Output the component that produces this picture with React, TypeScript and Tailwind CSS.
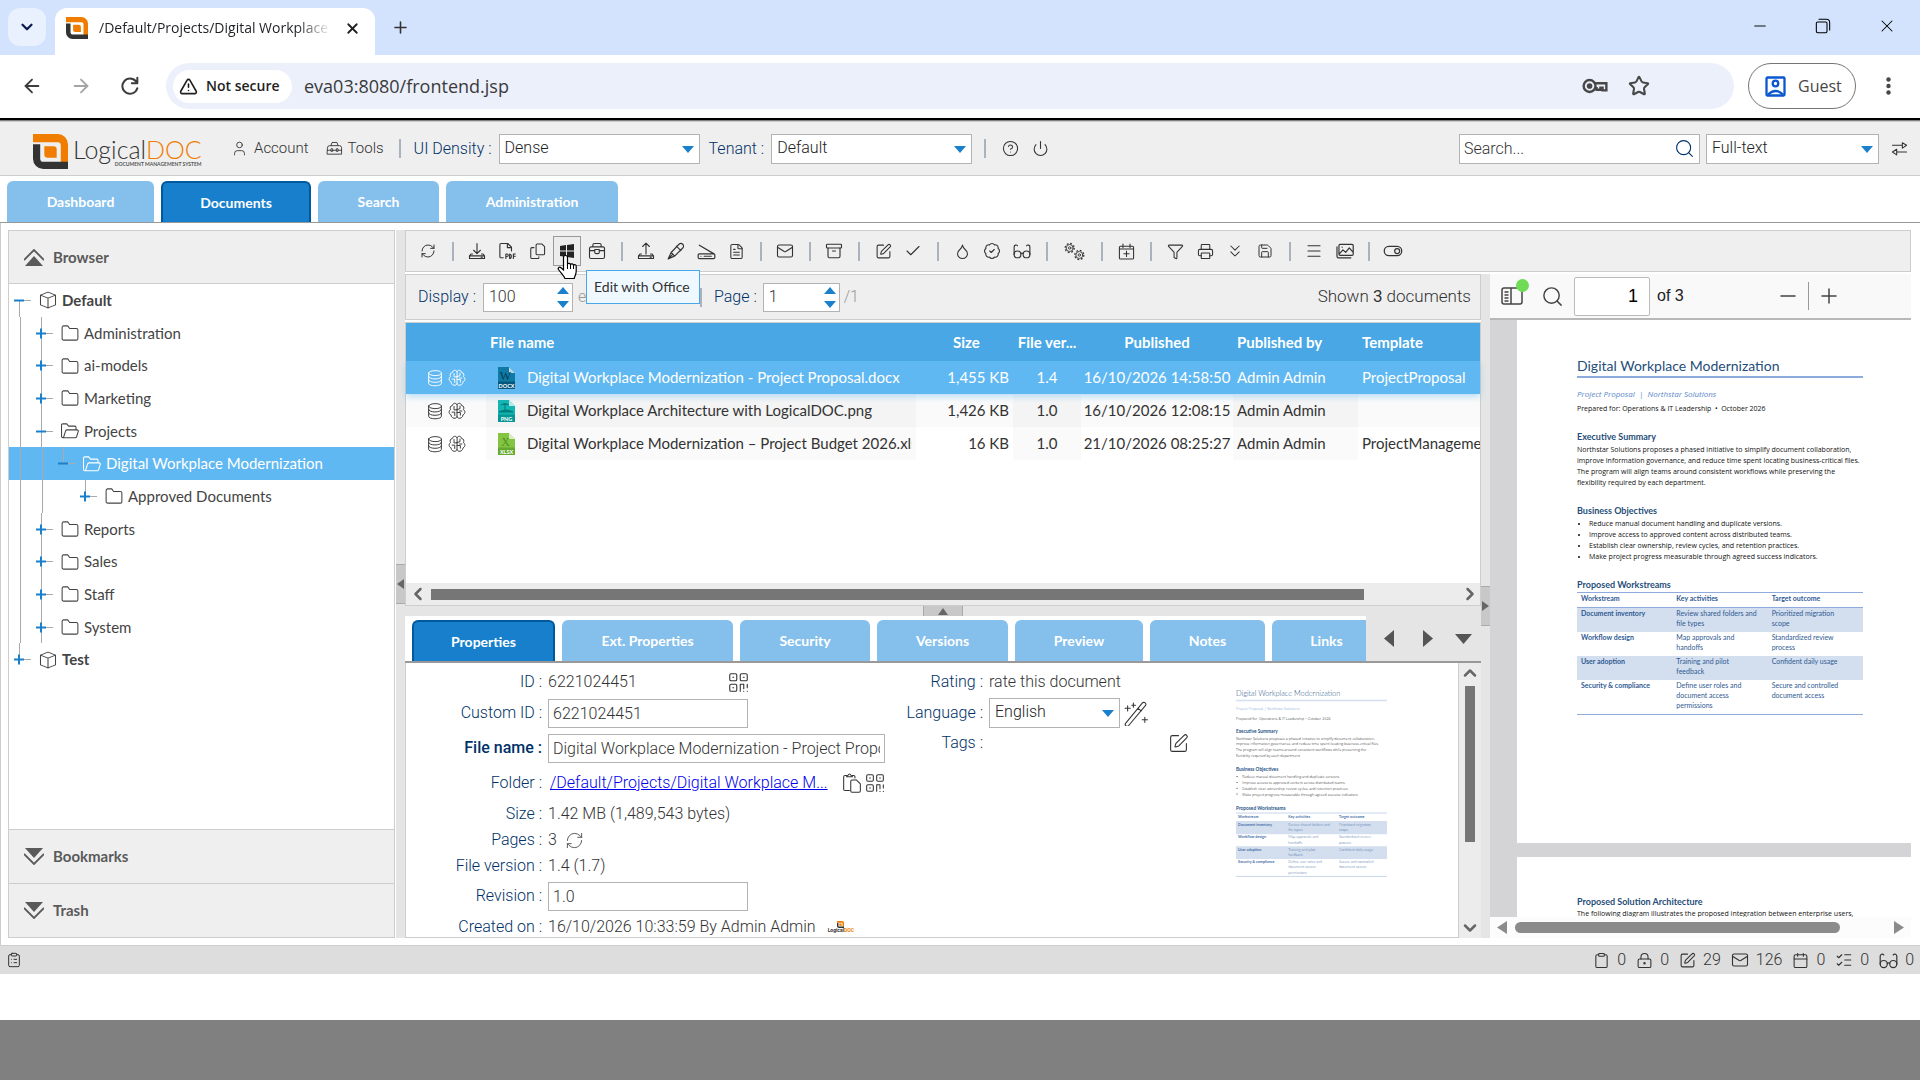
import type { ReactNode } from "react";
import {
  Archive,
  ArrowLeft,
  ArrowRight,
  BadgeCheck,
  Calendar,
  Check,
  ChevronDown,
  ChevronLeft,
  ChevronRight,
  ChevronUp,
  ChevronsDown,
  CircleHelp,
  Clipboard,
  ClipboardList,
  Droplet,
  FileText,
  Filter,
  ListChecks,
  LockKeyhole,
  Mail,
  Menu,
  Minus,
  Plus,
  Power,
  Printer,
  RefreshCw,
  Save,
  Search,
  SquarePen,
  Star,
  TriangleAlert,
  User,
  X,
} from "lucide-react";

type IconProps = { size?: number; className?: string; strokeWidth?: number };

const Svg = ({
  size = 20,
  className = "",
  strokeWidth = 1.25,
  children,
}: IconProps & { children: ReactNode }) => (
  <svg
    width={size}
    height={size}
    viewBox="0 0 24 24"
    fill="none"
    stroke="currentColor"
    strokeWidth={strokeWidth}
    strokeLinecap="round"
    strokeLinejoin="round"
    className={className}
    aria-hidden="true"
  >
    {children}
  </svg>
);

/* ---------- custom icons ---------- */

const Cube = (p: IconProps) => (
  <Svg {...p}>
    <path d="M12 1.5 22 5.5v13l-10 4-10-4v-13z M2 5.5l10 4 10-4 M12 9.5v13" />
  </Svg>
);

const FolderClosed = (p: IconProps) => (
  <Svg {...p}>
    <path d="M1.5 19.5v-15a2 2 0 0 1 2-2h5.5l2.5 3.5h9a2 2 0 0 1 2 2v11.5a2 2 0 0 1-2 2h-17a2 2 0 0 1-2-2z" />
  </Svg>
);

const FolderOpened = (p: IconProps) => (
  <Svg {...p}>
    <path d="M2.5 21h16.5a2 2 0 0 0 1.8-1.3L23 12.5a1.5 1.5 0 0 0-1.5-2H8a2 2 0 0 0-1.8 1.3L3.5 20a1.5 1.5 0 0 1-2.8-.8V4a1.5 1.5 0 0 1 1.5-1.5h5.5L10 5.5h8.5A1.5 1.5 0 0 1 20 7v3.5" />
  </Svg>
);

const Toolbox = (p: IconProps) => (
  <Svg {...p}>
    <path d="M2 11a3 3 0 0 1 3-3h14a3 3 0 0 1 3 3v9H2z M7 8l1.5-4.5h7L17 8 M2 14.5h5 M9.5 14.5h5 M17 14.5h5 M7 13v3h2.5v-3z M14.5 13v3H17v-3z" />
  </Svg>
);

const Drive = ({ up, ...p }: IconProps & { up?: boolean }) => (
  <Svg {...p}>
    <path d="M6 16H4l-2 2.5V22h20v-3.5L20 16h-2 M2 18.5h20 M17.5 20.3h1.5" />
    {up ? <path d="M12 16V2 M7.5 6 12 1.5 16.5 6" /> : <path d="M12 2v13 M7.5 11 12 15.5 16.5 11" />}
  </Svg>
);

const PdfFile = (p: IconProps) => (
  <Svg {...p}>
    <path d="M7 21H4a1.5 1.5 0 0 1-1.5-1.5v-16A1.5 1.5 0 0 1 4 2h9l5 5v5 M12.5 2v5.5H18" />
    <path d="M10.5 22v-6h1.5a1.5 1.5 0 0 1 0 3.3h-1.5 M15.5 16v6c3 0 3-6 0-6z M20.5 22v-6H23 M20.5 19H23" />
  </Svg>
);

const CopyPages = (p: IconProps) => (
  <Svg {...p}>
    <path d="M11.5 1.5h7L22 5v10a1.5 1.5 0 0 1-1.5 1.5h-9A1.5 1.5 0 0 1 10 15V3a1.5 1.5 0 0 1 1.5-1.5z M7 6.5H4A1.5 1.5 0 0 0 2.5 8v12.5A1.5 1.5 0 0 0 4 22h8.5a1.5 1.5 0 0 0 1.5-1.5v-1" />
  </Svg>
);

const Suitcase = (p: IconProps) => (
  <Svg {...p}>
    <path d="M4 6.5h16a2 2 0 0 1 2 2V20a2 2 0 0 1-2 2H4a2 2 0 0 1-2-2V8.5a2 2 0 0 1 2-2z M6.5 6.5V4a2 2 0 0 1 2-2h7a2 2 0 0 1 2 2v2.5 M2 11.5h7 M15 11.5h7 M9 10h6v3.5a2 2 0 0 1-2 2h-2a2 2 0 0 1-2-2z" />
  </Svg>
);

const Pen = (p: IconProps) => (
  <Svg {...p}>
    <path d="M1.5 22.5 5.5 14 16 3a3.5 3.5 0 0 1 5 5L10.5 18.5z M12.5 5.5l6 6 M5.5 14l4.5 4.5 M1.5 22.5l6-6" />
  </Svg>
);

const Scanner = (p: IconProps) => (
  <Svg {...p}>
    <path d="M3 15h18a1.5 1.5 0 0 1 1.5 1.5v3A1.5 1.5 0 0 1 21 21H3a1.5 1.5 0 0 1-1.5-1.5v-3A1.5 1.5 0 0 1 3 15z M9 18h9 M5 18h.1 M3 4l18.5 11" />
  </Svg>
);

const Spectacles = (p: IconProps) => (
  <Svg {...p}>
    <circle cx="6" cy="16.5" r="4.5" />
    <circle cx="18" cy="16.5" r="4.5" />
    <path d="M10.5 15.5q1.5-1.2 3 0 M1.5 16.5V6.5A2.5 2.5 0 0 1 6 5 M22.5 16.5V6.5A2.5 2.5 0 0 0 18 5" />
  </Svg>
);

const Gear = ({ cx, cy }: { cx: number; cy: number }) => (
  <g>
    <circle cx={cx} cy={cy} r="5.2" strokeDasharray="2.04 2.04" strokeWidth="1.4" strokeLinecap="butt" />
    <circle cx={cx} cy={cy} r="4" />
    <circle cx={cx} cy={cy} r="1.4" />
  </g>
);

const Gears = (p: IconProps) => (
  <Svg {...p}>
    <Gear cx={6.5} cy={8} />
    <Gear cx={17.5} cy={16} />
  </Svg>
);

const CalendarAdd = (p: IconProps) => (
  <Svg {...p}>
    <path d="M3.5 4.5h17a1.5 1.5 0 0 1 1.5 1.5v15a1.5 1.5 0 0 1-1.5 1.5h-17A1.5 1.5 0 0 1 2 21V6a1.5 1.5 0 0 1 1.5-1.5z M2 8.5h20 M7 1.5v5 M17 1.5v5 M12 11.5v7.5 M8.2 15.3h7.5" />
  </Svg>
);

const PictureStack = (p: IconProps) => (
  <Svg {...p}>
    <path d="M6.5 3h15A1.5 1.5 0 0 1 23 4.5v11a1.5 1.5 0 0 1-1.5 1.5h-15A1.5 1.5 0 0 1 5 15.5v-11A1.5 1.5 0 0 1 6.5 3z M5.5 15l4.5-5 3.5 3L18 7.5l5 5.5 M2.5 6v12A2 2 0 0 0 4.5 20H20 M9 6.5h.1" />
  </Svg>
);

const Switch = (p: IconProps) => (
  <Svg {...p}>
    <rect x="1.5" y="6.5" width="21" height="11" rx="5.5" />
    <circle cx="17" cy="12" r="3" />
  </Svg>
);

const Transfer = (p: IconProps) => (
  <Svg {...p}>
    <path d="M2 7.5h14 M16 4l6 3.5-6 4z M22 17H8 M8 13l-6 4 6 4z" />
  </Svg>
);

const Database = (p: IconProps) => (
  <Svg {...p}>
    <path d="M3.5 5.5c0-4.5 17-4.5 17 0s-17 4.500-17 0z M3.5 5.5V19c0 4.5 17 4.5 17 0V5.5 M3.5 10c0 4.5 17 4.5 17 0 M3.5 14.5c0 4.5 17 4.5 17 0" />
  </Svg>
);

const Brain = (p: IconProps) => (
  <Svg {...p}>
    <path d="M12 3.500C11 .8 6.500 1 6 4.500 3 5 2 8 3.500 10c-3 2-2.500 6 .5 7 0 3.500 3.500 5.500 6 4.500 1.500-.5 2-1.500 2-2.500z M12 3.500C13 .8 17.500 1 18 4.500c3 .5 4 3.500 2.500 5.500 3 2 2.500 6-.5 7 0 3.500-3.500 5.500-6 4.500-1.500-.5-2-1.500-2-2.500" />
    <path d="M8 6v4.500h4 M5.500 13.500H9V18 M16 5.500V9l-4 1 M12 14h4.500v3.500 M18.500 12h-3" />
  </Svg>
);

const QrCode = (p: IconProps) => (
  <Svg {...p}>
    <rect x="2" y="2" width="8" height="8" rx="1.5" />
    <rect x="14" y="2" width="8" height="8" rx="1.5" />
    <rect x="2" y="14" width="8" height="8" rx="1.5" />
    <path d="M5.5 6h1 M17.5 6h1 M5.5 18h1 M14 22v-8h4v5 M22 14v4 M18 22v.1 M22 22v.1" />
  </Svg>
);

const CopyPath = (p: IconProps) => (
  <Svg {...p}>
    <path d="M9 21H3.500A1.500 1.500 0 0 1 2 19.500V4.500A1.500 1.500 0 0 1 3.500 3H5.500 M12.500 3H14A1.500 1.500 0 0 1 15.500 4.500V6 M5.500 4.500q0-1.500 1.500-1.500 2-3.500 4 0 1.500 0 1.500 1.500z M12 8.500h5.500L22 13v8.500a1.500 1.500 0 0 1-1.500 1.500H12a1.500 1.500 0 0 1-1.500-1.500V10a1.500 1.500 0 0 1 1.500-1.500z" />
  </Svg>
);

const Wand = (p: IconProps) => (
  <Svg {...p} strokeWidth={1}>
    <path d="M1.500 21.500 17.500 2a1.800 1.800 0 0 1 3 2.500L4.500 23.500a1.800 1.800 0 0 1-3-2z M13.500 7l3 2.500 M1 7h5 M3.500 4.500v5 M9 2v4 M7.500 4h3.500 M17.500 18h5 M20 15.500v5" />
  </Svg>
);

const Dropdown = ({ className = "" }: { className?: string }) => (
  <svg width="12" height="7" viewBox="0 0 12 7" className={className} aria-hidden="true">
    <path d="M0 0h12L6 7z" fill="#1a80cc" />
  </svg>
);

const LogoMark = ({ size }: { size: number }) => (
  <svg width={size} height={size} viewBox="0 0 34 34" aria-hidden="true">
    <path d="M0 0h24a10 10 0 0 1 10 10v18h-7V11q0-3-3-3H0z" fill="#f07d00" />
    <path d="M0 10h7v14q0 3 3 3h24v7H10A10 10 0 0 1 0 24z" fill="#333" />
    <path d="M11 12h9q3 0 3 3v8h-9q-3 0-3-3z" fill="#f07d00" />
  </svg>
);

/* ---------- browser chrome ---------- */

const TitleBar = () => (
  <div className="flex h-[55px] items-end bg-[#d3e2fd] pl-2">
    <button
      aria-label="Search tabs"
      className="mb-[9px] flex h-[38px] w-[38px] items-center justify-center rounded-xl bg-[#e9f0fe] text-[#0b1d4f]"
    >
      <ChevronDown size={18} strokeWidth={3} />
    </button>
    <div className="ml-[9px] flex h-[47px] w-[320px] items-center rounded-t-xl bg-white pr-[14px] pb-[7px] pl-[11px]">
      <LogoMark size={22} />
      <span className="ml-[11px] w-[232px] overflow-hidden bg-linear-to-r from-[#202124] from-85% to-white bg-clip-text text-sm whitespace-nowrap text-transparent">
        /Default/Projects/Digital Workplace
      </span>
      <button aria-label="Close tab" className="ml-auto text-[#1f1f1f]">
        <X size={17} strokeWidth={2.5} />
      </button>
    </div>
    <button aria-label="New tab" className="mb-[18px] ml-4 text-[#333]">
      <Plus size={19} strokeWidth={2} />
    </button>
    <div className="mb-[19px] ml-auto flex items-center gap-[46px] pr-[23px] text-black">
      <button aria-label="Minimize">
        <Minus size={18} strokeWidth={1.25} />
      </button>
      <button aria-label="Restore">
        <Svg size={16} strokeWidth={1.6}>
          <path d="M4 6h12a2 2 0 0 1 2 2v12a2 2 0 0 1-2 2H4a2 2 0 0 1-2-2V8a2 2 0 0 1 2-2z M6 2h11a5 5 0 0 1 5 5v11" />
        </Svg>
      </button>
      <button aria-label="Close">
        <X size={20} strokeWidth={1.25} />
      </button>
    </div>
  </div>
);

const AddressBar = () => (
  <div className="flex h-[63px] items-start bg-white pt-2">
    <div className="flex h-[46px] w-[166px] items-center gap-[27px] pl-[21px]">
      <button aria-label="Back" className="text-[#3c3c3c]">
        <ArrowLeft size={22} />
      </button>
      <button aria-label="Forward" className="text-[#a5a5a5]">
        <ArrowRight size={22} />
      </button>
      <button aria-label="Reload" className="text-[#3c3c3c]">
        <Svg size={22} strokeWidth={2.2}>
          <path d="M20 14.500A8.300 8.300 0 1 1 18.500 7 M20 3v6h-6" />
        </Svg>
      </button>
    </div>
    <div className="flex h-[46px] flex-1 items-center rounded-full bg-[#ebf0fa] pr-[84px] pl-[7px]">
      <button className="flex h-[33px] w-[119px] items-center gap-2 rounded-full bg-white pl-[6px] text-sm font-semibold text-[#1f1f1f]">
        <TriangleAlert size={19} />
        Not secure
      </button>
      <input
        aria-label="Address"
        defaultValue="eva03:8080/frontend.jsp"
        className="ml-3 w-full flex-1 text-lg text-[#3a3a3a] outline-none"
      />
      <button aria-label="Passwords" className="text-[#474747]">
        <Svg size={26} strokeWidth={2.2}>
          <circle cx="7" cy="12" r="5.5" />
          <circle cx="7" cy="12" r="1.5" fill="currentColor" />
          <path d="M12 9.5h10.5v6.5h-3.5v-2.5h-2v2h-3.5v-1.5h-1" strokeLinejoin="miter" />
        </Svg>
      </button>
      <button aria-label="Bookmark" className="ml-5 text-[#474747]">
        <Star size={22} strokeWidth={2.25} />
      </button>
    </div>
    <button className="ml-[14px] flex h-[46px] w-[108px] items-center gap-3 rounded-full border border-[#757575] pl-4 text-base text-[#474747]">
      <svg width="21" height="21" viewBox="0 0 21 21" fill="none" stroke="#0b57d0" strokeWidth="2.3" aria-hidden="true">
        <rect x="1.5" y="1.5" width="18" height="18" rx="1" />
        <circle cx="10.5" cy="7.5" r="2.8" />
        <path d="M3 18.5q7.5-7 15 0" />
      </svg>
      Guest
    </button>
    <button aria-label="Menu" className="flex h-[46px] w-16 items-center justify-center">
      <svg width="5" height="18" viewBox="0 0 5 18" fill="#474747" aria-hidden="true">
        <circle cx="2.5" cy="2.5" r="2.2" />
        <circle cx="2.5" cy="9" r="2.2" />
        <circle cx="2.5" cy="15.5" r="2.2" />
      </svg>
    </button>
  </div>
);

/* ---------- application header ---------- */

const Separator = ({ className = "" }: { className?: string }) => (
  <div className={`h-[19px] w-[2px] bg-[#a9b3bf] ${className}`} />
);

const SelectBox = ({ id, value, className }: { id: string; value: string; className: string }) => (
  <div className={`relative ${className}`}>
    <select
      id={id}
      aria-label={id}
      defaultValue={value}
      className="h-[30px] w-full appearance-none border border-[#b3b3b3] bg-white pb-[2px] pl-[5px] text-base font-light text-[#222] outline-none"
    >
      <option>{value}</option>
    </select>
    <Dropdown className="pointer-events-none absolute top-[12px] right-[6px]" />
  </div>
);

const Header = () => (
  <header className="flex h-[55px] items-center border-y border-[#cdcdcd] bg-[#efefef] font-[Roboto,sans-serif] text-base font-light text-[#333]">
    <a href="#home" className="ml-[33px] flex w-[172px] items-center pt-[6px]" aria-label="LogicalDOC">
      <LogoMark size={35} />
      <span className="ml-[5px] flex flex-col font-[Lato,sans-serif] leading-none">
        <span className="text-[25px] leading-6 text-[#333]">
          Logical<span className="text-[#f07d00]">DOC</span>
        </span>
        <span className="self-end text-[5px] leading-[6px] font-bold text-[#555]">DOCUMENT MANAGEMENT SYSTEM</span>
      </span>
    </a>
    <button className="ml-[26px] flex items-center gap-[6px] text-[15px]">
      <User size={17} strokeWidth={1.25} />
      Account
    </button>
    <button className="ml-[17px] flex items-center gap-[5px] text-[15px]">
      <Toolbox size={17} />
      Tools
    </button>
    <Separator className="ml-[15px]" />
    <label htmlFor="density" className="ml-[13px] text-[#003168]">
      UI Density :
    </label>
    <SelectBox id="density" value="Dense" className="ml-[7px] w-[201px]" />
    <label htmlFor="tenant" className="ml-[9px] text-[#003168]">
      Tenant :
    </label>
    <SelectBox id="tenant" value="Default" className="ml-[7px] w-[201px]" />
    <Separator className="ml-3" />
    <button aria-label="Help" className="ml-4">
      <CircleHelp size={17} strokeWidth={1.5} />
    </button>
    <button aria-label="Logout" className="ml-[13px]">
      <Power size={17} strokeWidth={1.5} />
    </button>
    <div className="ml-auto flex h-[30px] w-[241px] items-center border border-[#b3b3b3] bg-white px-1">
      <input aria-label="Search" placeholder="Search..." className="min-w-0 flex-1 outline-none placeholder:text-[#333]" />
      <Search size={21} strokeWidth={1.25} className="text-[#003168]" />
    </div>
    <SelectBox id="searchmode" value="Full-text" className="ml-[6px] w-[173px]" />
    <button aria-label="Switch" className="mr-3 ml-3">
      <Transfer size={17} strokeWidth={1.5} />
    </button>
  </header>
);

const mainTabs = [
  { label: "Dashboard", width: "w-[147px]" },
  { label: "Documents", width: "w-[150px]", active: true },
  { label: "Search", width: "w-[121px]" },
  { label: "Administration", width: "w-[172px]" },
];

const tabOn = "bg-[#187fcd] border-x-2 border-t-2 border-[#00599c]";
const tabOff = "bg-[#85c0ec] pt-px";

const MainTabs = () => (
  <nav className="flex h-[47px] items-end gap-[7px] border-b border-[#999] bg-white pl-[7px]">
    {mainTabs.map((t) => (
      <button
        key={t.label}
        className={`h-[41px] rounded-t-md text-sm font-bold text-white ${t.width} ${t.active ? tabOn : tabOff}`}
      >
        {t.label}
      </button>
    ))}
  </nav>
);

/* ---------- left browser panel ---------- */

const tree = [
  { name: "Default", depth: 0, open: true, workspace: true },
  { name: "Administration", depth: 1 },
  { name: "ai-models", depth: 1 },
  { name: "Marketing", depth: 1 },
  { name: "Projects", depth: 1, open: true },
  { name: "Digital Workplace Modernization", depth: 2, open: true, selected: true },
  { name: "Approved Documents", depth: 3 },
  { name: "Reports", depth: 1 },
  { name: "Sales", depth: 1 },
  { name: "Staff", depth: 1 },
  { name: "System", depth: 1 },
  { name: "Test", depth: 0, workspace: true, last: true },
];

const Guide = ({ full }: { full?: boolean }) => (
  <div className="flex w-[22px] justify-center">
    {full && <div className="w-px bg-[#aaa]" />}
  </div>
);

const Opener = ({ open, last, depth }: { open?: boolean; last?: boolean; depth: number }) => (
  <svg width="30" height="33" viewBox="0 0 30 33" className="shrink-0" aria-hidden="true">
    <path
      d={`M11 16.5h11 ${depth === 0 && open ? "M10.5 17v16" : last || depth > 1 ? "M10.5 0v16" : "M10.5 0v33"}`}
      stroke="#aaa"
      fill="none"
    />
    <path d={open ? "M5 16.5h10" : "M5 16.5h10M10 11.5v10"} stroke="#1a80cc" strokeWidth="2" />
  </svg>
);

const Tree = () => (
  <ul className="flex h-[392px] flex-col text-[15px] text-[#444]">
    {tree.map((n) => (
      <li
        key={n.name}
        className={`flex flex-1 items-center overflow-hidden ${n.selected ? "bg-[#5fb8f1] text-white" : ""}`}
      >
        <div className="flex self-stretch">
          {n.depth > 0 && <Guide full />}
          {n.depth > 1 && <Guide full />}
          {n.depth > 2 && <Guide />}
        </div>
        <Opener open={n.open} last={n.last} depth={n.depth} />
        {n.workspace ? (
          <Cube size={18} strokeWidth={1.4} />
        ) : n.open ? (
          <FolderOpened size={18} strokeWidth={1.4} />
        ) : (
          <FolderClosed size={18} strokeWidth={1.4} />
        )}
        <span className={`ml-[5px] ${n.workspace ? "font-bold" : ""}`}>{n.name}</span>
      </li>
    ))}
  </ul>
);

const SectionHeader = ({ label, open }: { label: string; open?: boolean }) => (
  <button className="flex w-full items-center gap-[9px] bg-[#efefef] pl-[15px] text-left text-[15px] font-bold text-[#5a5a5a]">
    <svg width="20" height="17" viewBox="0 0 20 17" className={open ? "" : "rotate-180"} aria-hidden="true">
      <path d="M0 11 10 1l10 10" fill="none" stroke="#5a5a5a" strokeWidth="1.8" />
      <path d="M1 17 10 7l9 10z" fill="#5a5a5a" />
    </svg>
    {label}
  </button>
);

const BrowserPanel = () => (
  <aside className="flex w-[387px] shrink-0 flex-col border border-[#cdcdcd]">
    <div className="grid h-[53px] border-b border-[#cdcdcd]">
      <SectionHeader label="Browser" open />
    </div>
    <Tree />
    <div className="mt-auto grid h-[54px] border-t border-[#cdcdcd]">
      <SectionHeader label="Bookmarks" />
    </div>
    <div className="grid h-[54px] border-t border-[#cdcdcd]">
      <SectionHeader label="Trash" />
    </div>
  </aside>
);

/* ---------- document toolbar ---------- */

const ToolButton = ({ label, children, wide }: { label: string; children: ReactNode; wide?: boolean }) => (
  <button aria-label={label} className={`flex h-[30px] items-center justify-center ${wide ? "w-9" : "w-[30px]"}`}>
    {children}
  </button>
);

const ToolSep = () => (
  <div className="flex w-[19px] justify-center">
    <Separator />
  </div>
);

const OfficeButton = () => (
  <div className="relative">
    <button
      aria-label="Edit with Office"
      className="mx-px flex h-[30px] w-7 items-center justify-center border border-[#999] bg-[#ececec]"
    >
      <svg width="14" height="14" viewBox="0 0 14 14" fill="#222" aria-hidden="true">
        <path d="M0 2l6-.9v5.400H0z M7 1l7-1v6.500H7z M0 7.500h6v5.400L0 12z M7 7.500h7V14l-7-1z" />
      </svg>
    </button>
    <svg width="20" height="26" viewBox="0 0 20 26" className="absolute top-[18px] left-[5px] z-20" aria-hidden="true">
      <path
        d="M6.500 16V3.500a2 2 0 0 1 4 0V10a1.700 1.700 0 0 1 3 .5 1.700 1.700 0 0 1 3 .8 1.500 1.500 0 0 1 2.700 1V17c0 4-1.500 5-2 7.500H8C7 22 3.500 18.500 1.500 15.500c-1-2 1-3 2.500-1.800z"
        fill="#fff"
        stroke="#000"
        strokeWidth="1.2"
      />
      <path d="M10.5 10v5 M13.5 11v4 M16.5 12v3" stroke="#000" strokeWidth="1" />
    </svg>
    <div
      role="tooltip"
      className="absolute top-[34px] left-[34px] z-10 flex h-[34px] w-[114px] items-center border border-[#48a7e4] bg-[#f0f8ff] pl-[7px] text-sm whitespace-nowrap text-[#333]"
    >
      Edit with Office
    </div>
  </div>
);

const Toolbar = () => (
  <div className="flex h-[42px] items-center border border-[#cdcdcd] bg-[#efefef] pl-[7px] text-[#333]">
    <ToolButton label="Refresh">
      <RefreshCw size={16} strokeWidth={1.5} />
    </ToolButton>
    <ToolSep />
    <ToolButton label="Download"><Drive size={18} strokeWidth={1.5} /></ToolButton>
    <ToolButton label="Export PDF"><PdfFile size={18} strokeWidth={1.5} /></ToolButton>
    <ToolButton label="Copy"><CopyPages size={17} strokeWidth={1.5} /></ToolButton>
    <OfficeButton />
    <ToolButton label="Briefcase"><Suitcase size={18} strokeWidth={1.5} /></ToolButton>
    <ToolSep />
    <ToolButton label="Upload"><Drive size={18} strokeWidth={1.5} up /></ToolButton>
    <ToolButton label="Sign"><Pen size={18} strokeWidth={1.5} /></ToolButton>
    <ToolButton label="Scan"><Scanner size={19} strokeWidth={1.5} /></ToolButton>
    <ToolButton label="New document"><FileText size={17} strokeWidth={1.5} /></ToolButton>
    <ToolSep />
    <ToolButton label="Send"><Mail size={18} strokeWidth={1.5} /></ToolButton>
    <ToolSep />
    <ToolButton label="Archive"><Archive size={18} strokeWidth={1.5} /></ToolButton>
    <ToolSep />
    <ToolButton label="Edit"><SquarePen size={17} strokeWidth={1.5} /></ToolButton>
    <ToolButton label="Confirm"><Check size={18} strokeWidth={1.5} /></ToolButton>
    <ToolSep />
    <ToolButton label="Stamp"><Droplet size={17} strokeWidth={1.5} /></ToolButton>
    <ToolButton label="Approve"><BadgeCheck size={18} strokeWidth={1.5} /></ToolButton>
    <ToolButton label="Review"><Spectacles size={18} strokeWidth={1.5} /></ToolButton>
    <ToolSep />
    <ToolButton label="Automation" wide><Gears size={21} strokeWidth={1} /></ToolButton>
    <ToolSep />
    <ToolButton label="Schedule"><CalendarAdd size={17} strokeWidth={1.5} /></ToolButton>
    <ToolSep />
    <ToolButton label="Filter"><Filter size={17} strokeWidth={1.5} /></ToolButton>
    <ToolButton label="Print"><Printer size={17} strokeWidth={1.5} /></ToolButton>
    <ToolButton label="Expand"><ChevronsDown size={20} strokeWidth={1.25} /></ToolButton>
    <ToolButton label="Save layout"><Save size={16} strokeWidth={1.5} /></ToolButton>
    <ToolSep />
    <ToolButton label="List"><Menu size={18} strokeWidth={1.5} /></ToolButton>
    <ToolButton label="Gallery"><PictureStack size={19} strokeWidth={1.5} /></ToolButton>
    <ToolSep />
    <ToolButton label="Toggle preview"><Switch size={20} strokeWidth={1.5} /></ToolButton>
  </div>
);

/* ---------- documents grid ---------- */

const Spinner = ({ id, value, className }: { id: string; value: string; className: string }) => (
  <div className={`flex h-[29px] items-center border border-[#b3b3b3] bg-white pr-[3px] pl-[5px] ${className}`}>
    <input id={id} defaultValue={value} className="w-full min-w-0 text-[#333] outline-none" />
    <div className="flex flex-col gap-[7px]">
      <Dropdown className="rotate-180" />
      <Dropdown />
    </div>
  </div>
);

const PagingBar = () => (
  <div className="mt-[2px] flex h-[46px] items-center border border-[#cdcdcd] bg-[#efefef] pr-[9px] pl-3 font-[Roboto,sans-serif] text-base font-light">
    <label htmlFor="display" className="text-[#003168]">
      Display :
    </label>
    <Spinner id="display" value="100" className="ml-[7px] w-[90px]" />
    <span className="ml-[5px] w-[118px] text-[#999]">elements</span>
    <Separator className="ml-1" />
    <label htmlFor="page" className="ml-3 text-[#003168]">
      Page :
    </label>
    <Spinner id="page" value="1" className="ml-[6px] w-[77px]" />
    <span className="ml-1 text-[#999]">/1</span>
    <span className="ml-auto text-[17px] text-[#333]">
      Shown <b>3</b> documents
    </span>
  </div>
);

const FileBadge = ({ label, color, dark, mark }: { label: string; color: string; dark: string; mark: string }) => (
  <svg width="17" height="22" viewBox="0 0 17 22" className="shrink-0" aria-hidden="true">
    <path d="M0 0h11l6 6v16H0z" fill={color} />
    <path d="M11 0l6 6h-6z" fill="#fff" opacity=".7" />
    {mark ? (
      <text x="7.5" y="12.5" textAnchor="middle" fontSize="12" fontFamily="Liberation Serif, serif" fill={dark}>
        {mark}
      </text>
    ) : (
      <path d="M1 12q7-4 14 0z M7 11V5 M3 5q4-3 8 0" fill={dark} stroke={dark} />
    )}
    <rect y="14.5" width="17" height="7.5" fill={dark} opacity=".55" />
    <text x="8.5" y="20.5" textAnchor="middle" fontSize="5.5" fontWeight="700" fill="#fff">
      {label}
    </text>
  </svg>
);

const docs = [
  {
    name: "Digital Workplace Modernization - Project Proposal.docx",
    size: "1,455 KB",
    version: "1.4",
    published: "16/10/2026 14:58:50",
    by: "Admin Admin",
    template: "ProjectProposal",
    badge: { label: "DOCX", color: "#0f7ba5", dark: "#04395a", mark: "W" },
    row: "relative bg-[#5fb8f1] text-white shadow-[0_3px_6px_rgba(95,184,241,0.4)]",
    alt: "",
  },
  {
    name: "Digital Workplace Architecture with LogicalDOC.png",
    size: "1,426 KB",
    version: "1.0",
    published: "16/10/2026 12:08:15",
    by: "Admin Admin",
    template: "",
    badge: { label: "PNG", color: "#13b5b1", dark: "#007d7c", mark: "" },
    row: "bg-[#fafafa]",
    alt: "bg-[#f4f4f4]",
  },
  {
    name: "Digital Workplace Modernization – Project Budget 2026.xlsx",
    size: "16 KB",
    version: "1.0",
    published: "21/10/2026 08:25:27",
    by: "Admin Admin",
    template: "ProjectManagement",
    badge: { label: "XLSX", color: "#84c441", dark: "#4d9422", mark: "X" },
    row: "bg-white",
    alt: "bg-[#fafafa]",
  },
];

const DocumentsGrid = () => (
  <div className="mt-[2px] flex h-[284px] flex-col border border-[#cdcdcd] bg-white">
    <table className="w-full table-fixed border-collapse text-[15px] text-[#333]">
      <colgroup>
        <col className="w-[80px]" />
        <col />
        <col className="w-[97px]" />
        <col className="w-[68px]" />
        <col className="w-[152px]" />
        <col className="w-[125px]" />
        <col className="w-[122px]" />
      </colgroup>
      <thead>
        <tr className="h-[38px] bg-[#48a7e4] text-white">
          <th aria-label="Status" />
          <th className="pl-1 text-left">File name</th>
          <th className="pl-1">Size</th>
          <th>File ver...</th>
          <th>Published</th>
          <th className="pl-1 text-left">Published by</th>
          <th className="pl-1 text-left">Template</th>
        </tr>
      </thead>
      <tbody>
        {docs.map((d) => (
          <tr key={d.name} className={`h-[33px] whitespace-nowrap ${d.row}`}>
            <td>
              <div className="flex gap-1 pl-5">
                <Database size={18} />
                <Brain size={18} />
              </div>
            </td>
            <td className={d.alt}>
              <div className="flex items-center overflow-hidden pr-1 pl-3">
                <FileBadge {...d.badge} />
                <span className="ml-3 overflow-hidden">{d.name}</span>
              </div>
            </td>
            <td className="pr-1 text-right">{d.size}</td>
            <td className={`text-center ${d.alt}`}>{d.version}</td>
            <td className="text-center">{d.published}</td>
            <td className={`pl-1 ${d.alt}`}>{d.by}</td>
            <td className="overflow-hidden pl-1">{d.template}</td>
          </tr>
        ))}
      </tbody>
    </table>
    <div className="mt-auto flex h-[22px] items-center bg-[#ececec] text-[#666]">
      <ChevronLeft size={20} strokeWidth={3} className="mx-[2px]" />
      <div className="mr-[96px] ml-px h-[11px] flex-1 bg-[#767676]" />
      <ChevronRight size={20} strokeWidth={3} />
    </div>
  </div>
);

/* ---------- details ---------- */

const detailTabs = [
  { label: "Properties", width: "w-[143px]", active: true },
  { label: "Ext. Properties", width: "w-[171px]" },
  { label: "Security", width: "w-[130px]" },
  { label: "Versions", width: "w-[131px]" },
  { label: "Preview", width: "w-[128px]" },
  { label: "Notes", width: "w-[115px]" },
  { label: "Links", width: "w-[109px]" },
];

const DetailTabs = () => (
  <div className="flex h-[47px] border-b-2 border-[#999]">
    <div className="flex min-w-0 flex-1 items-end gap-[7px] overflow-hidden bg-white pl-[7px]">
      {detailTabs.map((t) => (
        <button
          key={t.label}
          className={`h-[41px] shrink-0 rounded-t-md text-sm font-bold text-white ${t.width} ${t.active ? tabOn : tabOff}`}
        >
          {t.label}
        </button>
      ))}
    </div>
    <div className="flex w-[115px] items-center gap-[29px] bg-[#e5e5e5] pl-[18px] text-[#555]">
      <button aria-label="Previous tabs">
        <svg width="10" height="17" viewBox="0 0 10 17" fill="#555"><path d="M10 0v17L0 8.500z" /></svg>
      </button>
      <button aria-label="Next tabs">
        <svg width="10" height="17" viewBox="0 0 10 17" fill="#555"><path d="M0 0v17l10-8.500z" /></svg>
      </button>
      <button aria-label="All tabs" className="-ml-[7px]">
        <svg width="17" height="10" viewBox="0 0 17 10" fill="#555"><path d="M0 0h17L8.500 10z" /></svg>
      </button>
    </div>
  </div>
);

const Row = ({ label, height, bold, htmlFor, children }: {
  label: string;
  height: string;
  bold?: boolean;
  htmlFor?: string;
  children?: ReactNode;
}) => (
  <div className={`flex items-center ${height}`}>
    <label
      htmlFor={htmlFor}
      className={`mr-[6px] w-[136px] shrink-0 text-right text-[#003168] ${bold ? "font-medium" : ""}`}
    >
      {label} :
    </label>
    {children}
  </div>
);

const field = "h-[29px] border border-[#b3b3b3] bg-white px-1 text-[#333] outline-none";

const docRows = [
  ["Document inventory", ["Review shared folders and", "file types"], ["Prioritized migration", "scope"]],
  ["Workflow design", ["Map approvals and", "handoffs"], ["Standardized review", "process"]],
  ["User adoption", ["Training and pilot", "feedback"], ["Confident daily usage"]],
  ["Security & compliance", ["Define user roles and", "document access", "permissions"], ["Secure and controlled", "document access"]],
] as [string, string[], string[]][];

const summary = [
  "Northstar Solutions proposes a phased initiative to simplify document collaboration,",
  "improve information governance, and reduce time spent locating business-critical files.",
  "The program will align teams around consistent workflows while preserving the",
  "flexibility required by each department.",
];

const objectives = [
  "Reduce manual document handling and duplicate versions.",
  "Improve access to approved content across distributed teams.",
  "Establish clear ownership, review cycles, and retention practices.",
  "Make project progress measurable through agreed success indicators.",
];

const rowTops = [249, 273, 296, 320];

/* small rendition of the first page */
const Thumbnail = () => (
  <svg
    width="151"
    height="188"
    viewBox="0 0 286 356"
    className="mt-[27px] shrink-0"
    fontSize="7"
    fill="#111"
    fontFamily="Open Sans, sans-serif"
  >
    <text x="0" y="12" fill="#1f5587" fontSize="14" fontFamily="Lato, sans-serif">
      Digital Workplace Modernization
    </text>
    <path d="M0 20h286" stroke="#d3dff0" strokeWidth="3" />
    <text x="0" y="37" fill="#6f97d3">Project Proposal  |  Northstar Solutions</text>
    <text x="0" y="56">Prepared for: Operations &amp; IT Leadership  •  October 2026</text>
    <g fill="#1f5587" fontSize="9" fontWeight="700" fontFamily="Lato, sans-serif">
      <text x="0" y="81">Executive Summary</text>
      <text x="0" y="154">Business Objectives</text>
      <text x="0" y="228">Proposed Workstreams</text>
    </g>
    {summary.map((s, i) => (
      <text key={s} x="0" y={94 + i * 11}>{s}</text>
    ))}
    {objectives.map((s, i) => (
      <g key={s}>
        <circle cx="2" cy={164 + i * 11} r="1" />
        <text x="12" y={167 + i * 11}>{s}</text>
      </g>
    ))}
    <g fontFamily="Lato, sans-serif" fill="#4670a8">
      <path d="M0 233h286 M0 353h286" stroke="#b7cae6" strokeWidth="1.5" />
      <path d="M0 248h286v25H0z M0 296h286v24H0z" fill="#d3deee" />
      <g fontWeight="700">
        <text x="4" y="242">Workstream</text>
        <text x="99" y="242">Key activities</text>
        <text x="195" y="242">Target outcome</text>
      </g>
      {docRows.map(([name, acts, outs], i) => (
        <g key={name}>
          <text x="4" y={rowTops[i] + 8} fontWeight="700">{name}</text>
          {acts.map((a, j) => (
            <text key={a} x="99" y={rowTops[i] + 8 + j * 10}>{a}</text>
          ))}
          {outs.map((a, j) => (
            <text key={a} x="195" y={rowTops[i] + 8 + j * 10}>{a}</text>
          ))}
        </g>
      ))}
    </g>
  </svg>
);

const Properties = () => (
  <div className="flex h-[275px]">
    <div className="flex min-w-0 flex-1 overflow-hidden border-b border-l border-[#cdcdcd] bg-white font-[Roboto,sans-serif] text-base font-light text-[#333]">
      <div className="w-[441px] shrink-0 pt-1">
        <Row label="ID" height="h-[30px]">
          6221024451
          <button aria-label="ID barcode" className="ml-[91px]"><QrCode size={21} /></button>
        </Row>
        <Row label="Custom ID" height="h-8" htmlFor="customid">
          <input id="customid" defaultValue="6221024451" className={`w-[200px] ${field}`} />
        </Row>
        <Row label="File name" height="h-[38px]" htmlFor="filename" bold>
          <input
            id="filename"
            defaultValue="Digital Workplace Modernization - Project Proposal"
            className={`w-[337px] shrink-0 ${field}`}
          />
        </Row>
        <Row label="Folder" height="h-8">
          <a href="#folder" className="ml-[2px] w-[292px] shrink-0 whitespace-nowrap text-[#0000ee] underline">
            /Default/Projects/Digital Workplace M...
          </a>
          <button aria-label="Copy path" className="shrink-0"><CopyPath size={20} /></button>
          <button aria-label="Folder barcode" className="ml-[3px] shrink-0"><QrCode size={20} /></button>
        </Row>
        <Row label="Size" height="h-[30px]">1.42 MB (1,489,543 bytes)</Row>
        <Row label="Pages" height="h-[22px]">
          3
          <button aria-label="Count pages" className="ml-2"><RefreshCw size={19} strokeWidth={1} /></button>
        </Row>
        <Row label="File version" height="h-[30px]">1.4 (1.7)</Row>
        <Row label="Revision" height="h-[30px]" htmlFor="revision">
          <input id="revision" defaultValue="1.0" className={`w-[200px] ${field}`} />
        </Row>
        <Row label="Created on" height="h-8">
          <span className="whitespace-nowrap">16/10/2026 10:33:59 By Admin Admin</span>
          <span className="ml-3 flex flex-col items-center text-[5px] leading-[5px] font-bold">
            <LogoMark size={7} />
            <span>Logical<span className="text-[#f07d00]">DOC</span></span>
          </span>
        </Row>
      </div>
      <div className="w-[389px] shrink-0 pt-1">
        <Row label="Rating" height="h-[30px]">rate this document</Row>
        <Row label="Language" height="h-8" htmlFor="language">
          <SelectBox id="language" value="English" className="w-[131px]" />
          <button aria-label="Detect language" className="ml-1"><Wand size={25} /></button>
        </Row>
        <Row label="Tags" height="h-7">
          <button aria-label="Edit tags" className="ml-[179px]"><SquarePen size={21} strokeWidth={1.25} /></button>
        </Row>
      </div>
      <Thumbnail />
    </div>
    <div className="flex w-[23px] flex-col items-center border-l border-[#cdcdcd] bg-[#ececec] text-[#666]">
      <ChevronUp size={20} strokeWidth={3} />
      <div className="mt-[3px] h-[156px] w-[10px] bg-[#767676]" />
      <ChevronDown size={20} strokeWidth={3} className="mt-auto" />
    </div>
  </div>
);

/* ---------- preview pane ---------- */

const docHeading = "font-[Lato,sans-serif] text-[9px] leading-3 font-bold text-[#1f4e79]";

const Preview = () => (
  <section className="mt-[2px] flex h-[664px] w-[421px] shrink-0 flex-col bg-white">
    <div className="flex h-[46px] items-center border-b-2 border-[#b8b8b8] bg-[#f9f9fa] pl-[11px] text-[#444]">
      <button aria-label="Toggle sidebar" className="relative">
        <svg width="22" height="18" viewBox="0 0 22 18" fill="none" stroke="#444" strokeWidth="1.5" aria-hidden="true">
          <rect x="1" y="1" width="20" height="16" rx="2" />
          <path d="M10 1v16 M3.5 5h4 M3.5 8h4 M3.5 11h4 M3.5 14h4" />
        </svg>
        <span className="absolute -top-[8px] -right-[6px] h-[13px] w-[13px] rounded-full bg-[#70db55]" />
      </button>
      <button aria-label="Find" className="ml-[18px]">
        <Search size={23} strokeWidth={1.5} />
      </button>
      <input
        aria-label="Page"
        defaultValue="1"
        className="ml-[10px] h-[39px] w-[76px] rounded-xs border border-[#bbbbbc] bg-white pr-[11px] text-right font-['Liberation_Sans',sans-serif] text-lg text-black"
      />
      <span className="ml-[7px] font-['Liberation_Sans',sans-serif] text-base text-[#222]">of 3</span>
      <button aria-label="Zoom out" className="ml-auto">
        <Minus size={24} strokeWidth={1.5} />
      </button>
      <div className="mx-2 h-7 w-px bg-[#999]" />
      <button aria-label="Zoom in" className="mr-[70px]">
        <Plus size={24} strokeWidth={1.5} />
      </button>
    </div>
    <div className="flex min-h-0 flex-1 flex-col gap-[14px] overflow-hidden bg-[#d4d4d7] pl-[27px] font-['Open_Sans',sans-serif]">
      <article className="h-[523px] shrink-0 bg-white pr-12 pl-[60px] text-[7px] leading-[11px] text-[#111]">
        <h1 className="border-b-2 border-[#8faadc] pt-9 pb-px font-[Lato,sans-serif] text-[14px] leading-[19px] text-[#1f4e79]">
          Digital Workplace Modernization
        </h1>
        <p className="mt-[10px] text-[8px] whitespace-pre text-[#5b87c9] italic">Project Proposal  |  Northstar Solutions</p>
        <p className="mt-1 whitespace-pre">Prepared for: Operations &amp; IT Leadership  •  October 2026</p>
        <h2 className={`mt-[17px] ${docHeading}`}>Executive Summary</h2>
        <div className="mt-px">
          {summary.map((s) => (
            <p key={s} className="whitespace-nowrap">{s}</p>
          ))}
        </div>
        <h2 className={`mt-[17px] ${docHeading}`}>Business Objectives</h2>
        <ul className="mt-px list-disc pl-3">
          {objectives.map((s) => (
            <li key={s}>{s}</li>
          ))}
        </ul>
        <h2 className={`mt-[17px] ${docHeading}`}>Proposed Workstreams</h2>
        <table className="mt-px w-full table-fixed border-y border-[#8faadc] font-[Lato,sans-serif] leading-[10px] text-[#2f5a93]">
          <thead>
            <tr className="h-[15px] border-b border-[#8faadc] text-left align-top">
              <th className="pl-1">Workstream</th>
              <th className="pl-1">Key activities</th>
              <th className="pl-1">Target outcome</th>
            </tr>
          </thead>
          <tbody>
            {docRows.map(([name, acts, outs], i) => (
              <tr key={name} className={`align-top ${i % 2 ? "" : "bg-[#d3deee]"}`}>
                <th className="pb-1 pl-1 text-left">{name}</th>
                <td className="pb-1 pl-1 whitespace-nowrap">{acts.map((a) => <div key={a}>{a}</div>)}</td>
                <td className="pb-1 pl-1">{outs.map((a) => <div key={a}>{a}</div>)}</td>
              </tr>
            ))}
          </tbody>
        </table>
      </article>
      <article className="h-[523px] shrink-0 bg-white pt-[39px] pl-[60px] text-[7px] leading-[11px] text-[#111]">
        <h2 className={docHeading}>Proposed Solution Architecture</h2>
        <p>The following diagram illustrates the proposed integration between enterprise users,</p>
      </article>
    </div>
    <div className="flex h-[21px] items-center bg-[#fcfcfc] px-[7px]">
      <svg width="10" height="13" viewBox="0 0 10 13" fill="#8b8b8b"><path d="M10 0v13L0 6.500z" /></svg>
      <div className="mr-[54px] ml-2 h-[11px] flex-1 rounded-full bg-[#8b8b8b]" />
      <svg width="10" height="13" viewBox="0 0 10 13" fill="#8b8b8b"><path d="M0 0v13l10-6.500z" /></svg>
    </div>
  </section>
);

const VSplitter = ({ right, pad }: { right?: boolean; pad: string }) => (
  <div className={`w-[9px] shrink-0 bg-[#e5e5e5] ${pad}`}>
    <button
      aria-label={right ? "Collapse preview" : "Collapse browser"}
      className="flex h-10 w-full items-center justify-center border-y border-[#aaa] bg-[#c8c8c8]"
    >
      <svg width="7" height="10" viewBox="0 0 7 10" fill="#666" className={right ? "rotate-180" : ""}>
        <path d="M7 0v10L0 5z" />
      </svg>
    </button>
  </div>
);

const HSplitter = () => (
  <div className="flex h-[10px] justify-center bg-[#e5e5e5]">
    <button aria-label="Collapse details" className="flex w-10 items-center justify-center border-x border-[#aaa] bg-[#c8c8c8]">
      <svg width="10" height="7" viewBox="0 0 10 7" fill="#666">
        <path d="M0 7h10L5 0z" />
      </svg>
    </button>
  </div>
);

/* ---------- status bar ---------- */

const StatusItem = ({ label, value, children }: { label: string; value: string; children: ReactNode }) => (
  <button aria-label={label} className="flex items-center gap-[7px]">
    {children}
    {value}
  </button>
);

const StatusBar = () => (
  <footer className="flex h-[29px] items-center gap-[10px] border-t border-[#cdcdcd] bg-[#ddd] pr-[6px] pl-[6px] font-[Roboto,sans-serif] text-base font-light text-[#333]">
    <ClipboardList size={16} strokeWidth={1.5} className="mr-auto" />
    <StatusItem label="Clipboard" value="0"><Clipboard size={17} strokeWidth={1.5} /></StatusItem>
    <StatusItem label="Locked" value="0"><LockKeyhole size={17} strokeWidth={1.5} /></StatusItem>
    <StatusItem label="Checked out" value="29"><SquarePen size={17} strokeWidth={1.5} /></StatusItem>
    <StatusItem label="Messages" value="126"><Mail size={18} strokeWidth={1.5} /></StatusItem>
    <StatusItem label="Events" value="0"><Calendar size={17} strokeWidth={1.5} /></StatusItem>
    <StatusItem label="Tasks" value="0"><ListChecks size={18} strokeWidth={1.5} /></StatusItem>
    <StatusItem label="Readings" value="0"><Spectacles size={19} strokeWidth={1.5} /></StatusItem>
  </footer>
);

export default function App() {
  return (
    <div className="flex min-h-screen flex-col bg-[#808080] font-['Open_Sans',sans-serif]">
      <TitleBar />
      <AddressBar />
      <div className="mb-px h-[2px] bg-black" />
      <div className="bg-white pb-[46px] font-[Lato,sans-serif]">
        <Header />
        <MainTabs />
        <main className="flex border-l border-[#cdcdcd] pt-[7px] pr-[9px] pb-[7px] pl-[7px]">
          <BrowserPanel />
          <VSplitter pad="ml-px pt-[334px]" />
          <div className="min-w-0 flex-1">
            <Toolbar />
            <div className="flex">
              <div className="flex min-w-0 flex-1 flex-col">
                <PagingBar />
                <DocumentsGrid />
                <HSplitter />
                <DetailTabs />
                <Properties />
              </div>
              <VSplitter pad="mt-[2px] pt-[312px]" right />
              <Preview />
            </div>
          </div>
        </main>
        <StatusBar />
      </div>
    </div>
  );
}
